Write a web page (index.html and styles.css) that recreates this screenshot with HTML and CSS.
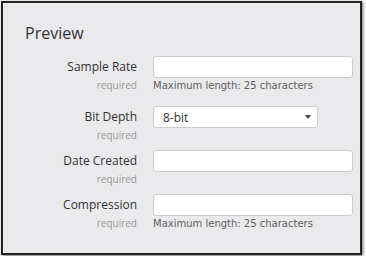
FILE: index.html
```html
<!DOCTYPE html>
<html>
<head>
<meta charset="utf-8">
<link rel="stylesheet" href="styles.css">
</head>
<body>
<div class="panel">
  <h2 class="title">Preview</h2>
  <div class="form">
    <div class="row">
      <div class="label"><div class="name">Sample Rate</div><div class="req">required</div></div>
      <div class="field"><div class="input"></div><div class="help">Maximum length: 25 characters</div></div>
    </div>
    <div class="row">
      <div class="label"><div class="name">Bit Depth</div><div class="req">required</div></div>
      <div class="field"><div class="select"><span>8-bit</span><span class="arrow"></span></div></div>
    </div>
    <div class="row">
      <div class="label"><div class="name">Date Created</div><div class="req">required</div></div>
      <div class="field"><div class="input"></div></div>
    </div>
    <div class="row">
      <div class="label"><div class="name">Compression</div><div class="req">required</div></div>
      <div class="field"><div class="input"></div><div class="help">Maximum length: 25 characters</div></div>
    </div>
  </div>
</div>
</body>
</html>
```

FILE: styles.css
```css
html, body {
  margin: 0;
  padding: 0;
  background: #ffffff;
}
body {
  padding: 1px;
  font-family: "Open Sans", "DejaVu Sans", sans-serif;
  color: #333;
}
.panel {
  box-sizing: border-box;
  width: 361px;
  height: 254px;
  background: #eaeaec;
  border: 2px solid #222;
  box-shadow: 1px 1px 3px rgba(0,0,0,0.6);
  padding: 0 22px;
}
.title {
  margin: 0;
  padding-top: 20px;
  font-size: 16px;
  line-height: 20px;
  font-weight: normal;
  color: #333;
  height: 33px;
}
.form {
  display: flex;
  flex-direction: column;
  gap: 8px;
}
.row {
  display: grid;
  grid-template-columns: 112px 200px;
  column-gap: 16px;
}
.label {
  text-align: right;
}
.name {
  font-size: 12px;
  line-height: 22px;
  color: #333;
}
.req {
  font-size: 10px;
  line-height: 14px;
  color: #999;
}
.input {
  box-sizing: border-box;
  height: 22px;
  background: #fff;
  border: 1px solid #ccc;
  border-radius: 3px;
}
.select {
  box-sizing: border-box;
  width: 165px;
  height: 22px;
  background: #fff;
  border: 1px solid #ccc;
  border-radius: 3px;
  display: flex;
  align-items: center;
  justify-content: space-between;
  padding: 0 6px 0 9px;
  font-size: 12px;
  color: #333;
}
.arrow {
  width: 0;
  height: 0;
  border-left: 3px solid transparent;
  border-right: 3px solid transparent;
  border-top: 4px solid #444;
}
.help {
  font-family: "DejaVu Sans", sans-serif;
  font-size: 10px;
  line-height: 13px;
  padding-top: 1px;
  margin-bottom: 6px;
  color: #606060;
  white-space: nowrap;
}
```
